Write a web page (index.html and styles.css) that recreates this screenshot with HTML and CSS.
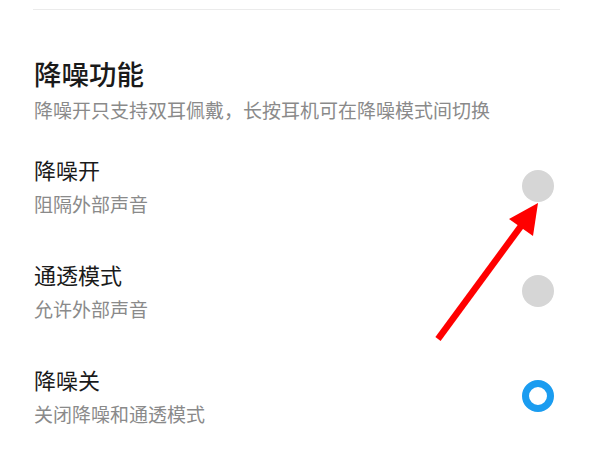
FILE: index.html
```html
<!DOCTYPE html>
<html lang="zh-CN">
<head>
<meta charset="utf-8">
<link rel="stylesheet" href="styles.css">
</head>
<body>
<div class="page">
  <div class="divider"></div>
  <section class="section">
    <h2 class="section-title">降噪功能</h2>
    <p class="section-desc">降噪开只支持双耳佩戴，长按耳机可在降噪模式间切换</p>
  </section>
  <ul class="options">
    <li class="option">
      <div class="option-text">
        <div class="option-title">降噪开</div>
        <div class="option-sub">阻隔外部声音</div>
      </div>
      <span class="radio"></span>
    </li>
    <li class="option">
      <div class="option-text">
        <div class="option-title">通透模式</div>
        <div class="option-sub">允许外部声音</div>
      </div>
      <span class="radio"></span>
    </li>
    <li class="option">
      <div class="option-text">
        <div class="option-title">降噪关</div>
        <div class="option-sub">关闭降噪和通透模式</div>
      </div>
      <span class="radio radio-on"></span>
    </li>
  </ul>
  <svg class="arrow" width="600" height="450" viewBox="0 0 600 450">
    <line x1="438" y1="330" x2="524" y2="213" stroke="#ff0000" stroke-width="6.5"/>
    <polygon points="538,194 509,210 533,227" fill="#ff0000"/>
  </svg>
</div>
</body>
</html>
```

FILE: styles.css
```css
* { box-sizing: border-box; }
html, body { margin: 0; padding: 0; background: #ffffff; }
body {
  font-family: "Noto Sans CJK SC", "Noto Sans", sans-serif;
  width: 600px;
  height: 450px;
  overflow: hidden;
}
.page {
  position: relative;
  width: 600px;
  height: 450px;
}
.divider {
  height: 1px;
  background: #ebebeb;
  margin: 9px 40px 0 33px;
}
.section {
  padding-left: 34px;
  margin-top: 45px;
}
.section-title {
  margin: 0;
  font-size: 27.5px;
  line-height: 36px;
  font-weight: 500;
  color: #1a1a1a;
}
.section-desc {
  margin: 6px 0 0 0;
  font-size: 19px;
  line-height: 26px;
  color: #8a8a8a;
}
.options {
  list-style: none;
  margin: 10px 0 0 0;
  padding: 0 46px 0 34px;
}
.option {
  display: flex;
  align-items: center;
  justify-content: space-between;
  height: 105px;
}
.option-title {
  font-size: 22px;
  line-height: 30px;
  color: #1a1a1a;
}
.option-sub {
  margin-top: 7px;
  font-size: 19px;
  line-height: 26px;
  color: #8a8a8a;
}
.radio {
  width: 32px;
  height: 32px;
  border-radius: 50%;
  background: #d6d6d6;
  flex: none;
}
.radio-on {
  background: #ffffff;
  border: 7.5px solid #1a9cf0;
}
.arrow {
  position: absolute;
  left: 0;
  top: 0;
  pointer-events: none;
}
```
